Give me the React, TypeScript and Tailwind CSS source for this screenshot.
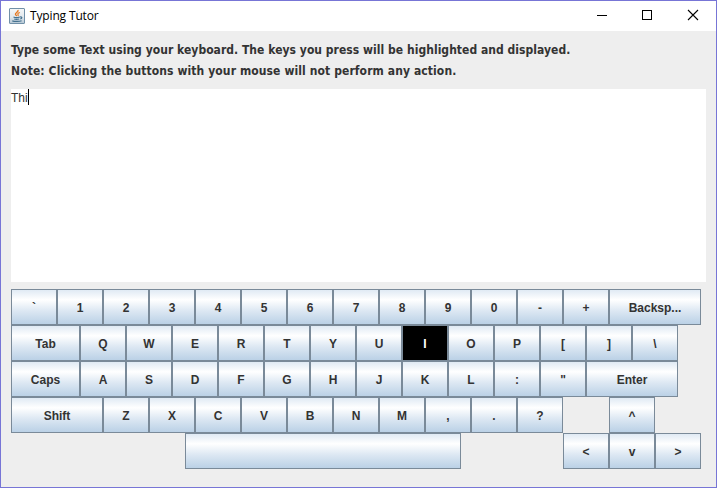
import React from "react";

type Key = { label: string; width?: string; gap?: string; active?: boolean };

const k = (label: string, width?: string, gap?: string): Key => ({ label, width, gap });

const rows: Key[][] = [
  [..."`1234567890-+"].map((c) => k(c)).concat(k("Backsp...", "w-[92px]")),
  [k("Tab", "w-[69px]"), ...[..."QWERTYUIOP[]\\"].map((c) => ({ label: c, active: c === "I" }))],
  [k("Caps", "w-[69px]"), ...[..."ASDFGHJKL:\""].map((c) => k(c)), k("Enter", "w-[92px]")],
  [k("Shift", "w-[92px]"), ...[..."ZXCVBNM,.?"].map((c) => k(c)), k("^", undefined, "ml-[46px]")],
  [k("", "w-[276px]", "ml-[174px]"), k("<", undefined, "ml-[102px]"), k("v"), k(">")],
];

function KeyButton({ label, width = "w-[46px]", gap = "", active }: Key) {
  const fill = active
    ? "bg-black text-white"
    : "bg-[linear-gradient(180deg,#dde8f3_0%,#ffffff_30%,#dde8f3_60%,#b8cfe5_100%)] text-[#333333]";
  return (
    <button
      tabIndex={-1}
      className={`flex h-9 shrink-0 items-center justify-center border border-[#7a8a99] bg-origin-border pt-px text-[12px] leading-none font-bold ${width} ${gap} ${fill}`}
    >
      {label}
    </button>
  );
}

function JavaIcon() {
  return (
    <svg width="16" height="16" viewBox="0 0 16 16" fill="none">
      <defs>
        <linearGradient id="tile" x1="0" y1="0" x2="0" y2="1">
          <stop offset="0" stopColor="#f5f7f8" />
          <stop offset="0.55" stopColor="#e3e9ed" />
          <stop offset="1" stopColor="#b4c6d4" />
        </linearGradient>
      </defs>
      <rect x="0.5" y="0.5" width="15" height="15" rx="0.5" fill="url(#tile)" stroke="#7190a8" />
      <path d="M9 2C9.7 4.2 5.8 4.7 6.5 6.4C6.8 7.2 7.7 7.6 7.8 8.2" stroke="#e5771e" strokeWidth="1.4" />
      <path d="M10.8 4.4C8.8 5.1 8.4 5.9 9.1 6.7C9.5 7.3 9.2 7.7 8.8 8.1" stroke="#e5771e" strokeWidth="1.1" />
      <path d="M4.5 9C6 9.6 9.2 9.5 10.8 9M5.2 11C6.4 11.5 8.7 11.4 10.2 11M11 9C13.5 8.4 13.3 10.3 11.3 11M3.3 12.9C5.5 13.7 10.6 13.6 12.6 12.7" stroke="#44718f" strokeWidth="1.2" />
    </svg>
  );
}

export default function App() {
  return (
    <div className="flex h-[488px] w-[717px] flex-col overflow-hidden border border-[#7775d6] bg-[#eeeeee] font-['Liberation_Sans',Arial,sans-serif]">
      <header className="flex h-[30px] shrink-0 items-center bg-white pl-2">
        <div className="-mt-px"><JavaIcon /></div>
        <h1 className="ml-[5px] flex-1 font-['Open_Sans',sans-serif] text-[12px] leading-4 tracking-[-0.15px] text-black">Typing Tutor</h1>
        <div className="flex h-full items-center text-black">
          <svg width="136" height="30" fill="none" stroke="currentColor" shapeRendering="crispEdges">
            <path d="M17 14.5H27" />
            <rect x="62.5" y="9.5" width="9" height="9" />
            <path d="M108 9L118 19M118 9L108 19" shapeRendering="auto" strokeWidth="1.1" />
          </svg>
        </div>
      </header>
      <main className="flex flex-col pl-2.5">
        <div className="flex flex-col pt-[9px] font-['DejaVu_Sans_Condensed','DejaVu_Sans',sans-serif] text-[12px] leading-[21px] font-bold text-[#333333]">
          <p className="tracking-[0.035px] whitespace-nowrap">Type some Text using your keyboard. The keys you press will be highlighted and displayed.</p>
          <p className="tracking-[0.1px] whitespace-nowrap">Note: Clicking the buttons with your mouse will not perform any action.</p>
        </div>
        <div className="mt-[7px] flex h-[193px] w-[695px] items-start bg-white text-[12px] leading-[18px] text-[#333333]">
          <span>Thi</span>
          <span className="h-4 w-px bg-black" />
        </div>
        <div className="mt-[7px] flex flex-col">
          {rows.map((row, i) => (
            <div key={i} className="flex">
              {row.map((key, j) => (
                <KeyButton key={j} {...key} />
              ))}
            </div>
          ))}
        </div>
      </main>
    </div>
  );
}
